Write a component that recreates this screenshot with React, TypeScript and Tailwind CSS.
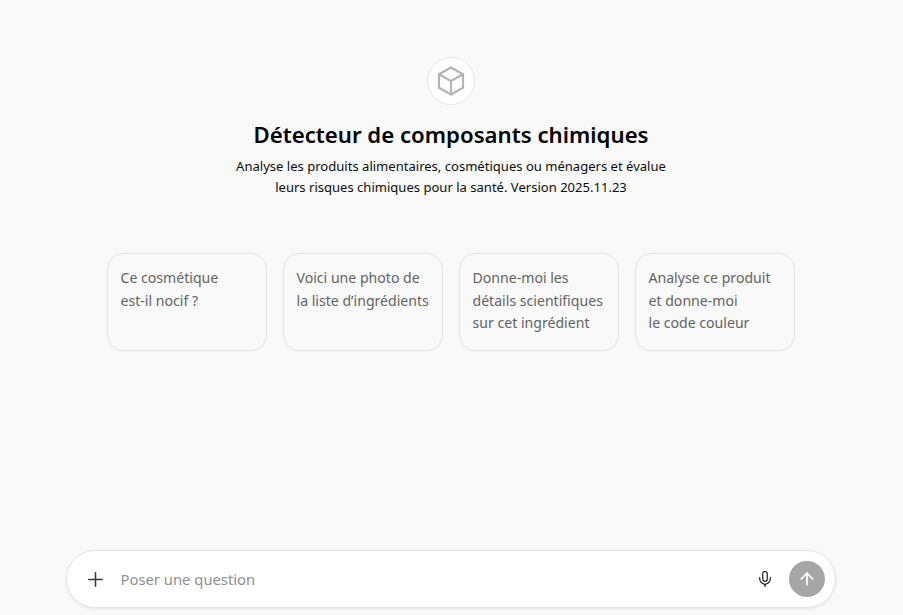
import React from "react";
import { Plus, Mic, ArrowUp } from "lucide-react";

const PROMPTS = [
  ["Ce cosmétique", "est-il nocif ?"],
  ["Voici une photo de", "la liste d’ingrédients"],
  ["Donne-moi les", "détails scientifiques", "sur cet ingrédient"],
  ["Analyse ce produit", "et donne-moi", "le code couleur"],
];

const PromptCard = ({ lines }: { lines: string[] }) => (
  <div className="h-[98px] w-40 rounded-2xl border border-[#e3e3e3] bg-[#f9f9f9] px-[12.5px] pt-[13px] text-left text-[14.1px] leading-[22.5px] text-[#636363] shadow-[0_1px_2px_rgba(0,0,0,0.03)]">
    {lines.map((line) => (
      <div key={line}>{line}</div>
    ))}
  </div>
);

const App = () => {
  return (
    <div className="flex h-[615px] w-full flex-col items-center overflow-hidden bg-[#f9f9f9] pr-px font-['Noto_Sans','Open_Sans',sans-serif] text-[#0d0d0d]">
      <div className="mt-[57px] flex h-12 w-12 items-center justify-center rounded-full border border-[#e5e5e5] bg-white">
        <svg
          width="34"
          height="34"
          viewBox="0 0 24 24"
          fill="none"
          stroke="#b4b4b4"
          strokeWidth="1.5"
          strokeLinecap="round"
          strokeLinejoin="round"
        >
          <path d="M12 2.5l8.5 4.75v9.5L12 21.5l-8.5-4.75v-9.5L12 2.5z" />
          <path d="M3.5 7.25L12 12l8.5-4.75" />
          <path d="M12 12v9.5" />
        </svg>
      </div>
      <h1 className="mt-[13px] text-[22.2px] leading-[34px] font-semibold text-black">
        Détecteur de composants chimiques
      </h1>
      <p className="mt-[4px] text-center text-[13.06px] leading-[21px]">
        Analyse les produits alimentaires, cosmétiques ou ménagers et évalue
        <br />
        leurs risques chimiques pour la santé. Version 2025.11.23
      </p>
      <div className="mt-[55px] flex gap-4">
        {PROMPTS.map((lines) => (
          <PromptCard key={lines[0]} lines={lines} />
        ))}
      </div>
      <div className="mt-auto mb-[7px] flex h-[58px] w-[770px] items-center rounded-[29px] border border-[#e5e5e5] bg-white pr-[10px] pl-[17px] shadow-[0_1px_3px_rgba(0,0,0,0.08)]">
        <Plus size={23} strokeWidth={1.6} className="text-[#3a3a3a]" />
        <span className="ml-[13.5px] flex-1 text-[14.8px] text-[#8f8f8f]">Poser une question</span>
        <Mic size={18} strokeWidth={1.5} className="mr-[15px] text-[#0d0d0d]" />
        <div className="flex h-9 w-9 items-center justify-center rounded-full bg-[#a6a6a6]">
          <ArrowUp size={20} strokeWidth={2} className="text-white" />
        </div>
      </div>
    </div>
  );
};

export default App;
